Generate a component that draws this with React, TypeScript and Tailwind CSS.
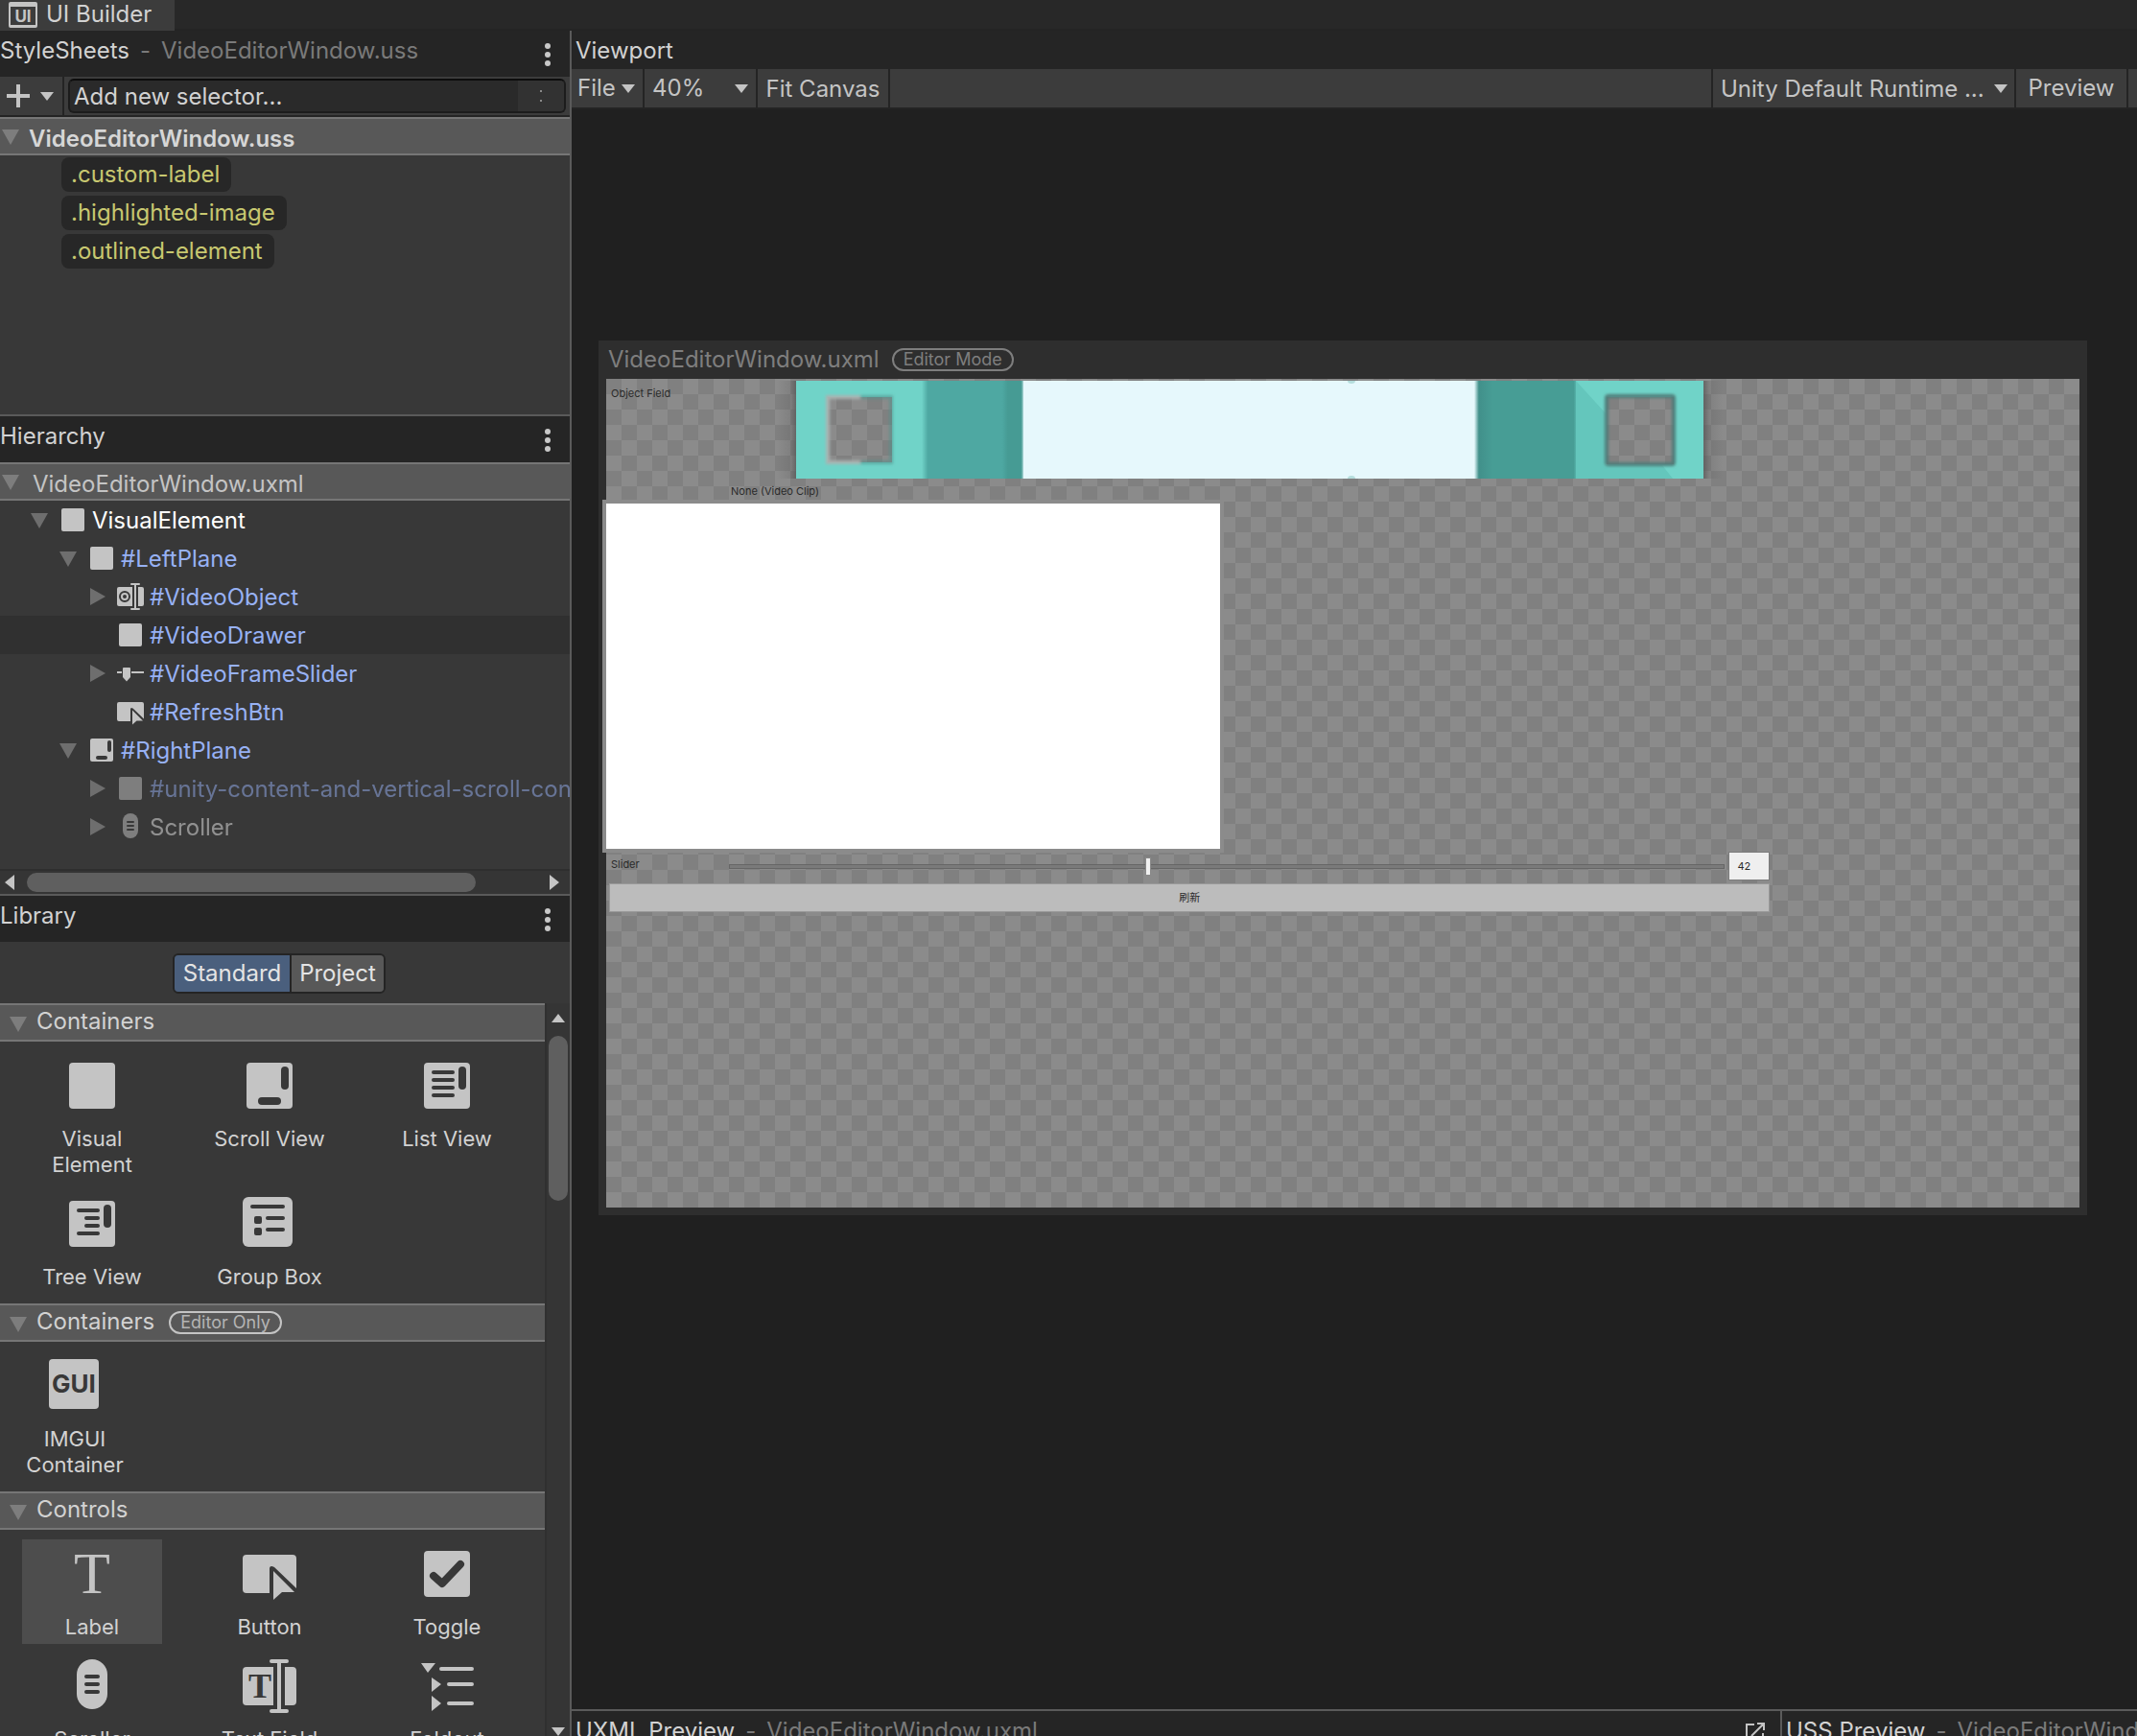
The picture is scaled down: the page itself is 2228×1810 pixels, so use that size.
import type { ReactNode } from 'react';

type IconName =
  | 'element'
  | 'scrollView'
  | 'listView'
  | 'treeView'
  | 'groupBox'
  | 'imgui'
  | 'label'
  | 'button'
  | 'toggle'
  | 'scroller'
  | 'textField'
  | 'objectField'
  | 'slider'
  | 'foldout';

// All element icons share a 64x64 grid. INK is the cut-out colour of the panel behind them.
const FILL = '#c4c4c4';
const INK = '#383838';

const ICONS: Record<IconName, ReactNode> = {
  element: <rect x="8" y="8" width="48" height="48" rx="4" fill={FILL} />,
  scrollView: (
    <>
      <rect x="8" y="8" width="48" height="48" rx="4" fill={FILL} />
      <rect x="44" y="12" width="8" height="24" rx="4" fill={INK} />
      <rect x="20" y="44" width="24" height="8" rx="4" fill={INK} />
    </>
  ),
  listView: (
    <>
      <rect x="8" y="8" width="48" height="48" rx="4" fill={FILL} />
      <rect x="44" y="12" width="8" height="24" rx="4" fill={INK} />
      <path d="M18 18H38M18 26H38M18 34H38M18 42H38" stroke={INK} strokeWidth="4" strokeLinecap="round" />
    </>
  ),
  treeView: (
    <>
      <rect x="8" y="8" width="48" height="48" rx="4" fill={FILL} />
      <rect x="44" y="12" width="8" height="24" rx="4" fill={INK} />
      <path d="M18 18H38M26 26H38M26 34H38M18 42H38" stroke={INK} strokeWidth="4" strokeLinecap="round" />
    </>
  ),
  groupBox: (
    <>
      <rect x="4" y="4" width="52" height="52" rx="6" fill={FILL} />
      <path d="M14 14H46M30 26H46M30 38H46" stroke={INK} strokeWidth="4" strokeLinecap="round" />
      <rect x="16" y="24" width="8" height="8" rx="2" fill={INK} />
      <rect x="16" y="36" width="8" height="8" rx="2" fill={INK} />
    </>
  ),
  imgui: (
    <>
      <rect x="5" y="4" width="52" height="52" rx="4" fill={FILL} />
      <text x="31" y="39" textAnchor="middle" fontFamily="Inter, sans-serif" fontWeight="700" fontSize="26" fill={INK}>
        GUI
      </text>
    </>
  ),
  label: (
    <text x="32" y="52" textAnchor="middle" fontFamily="Liberation Serif, serif" fontSize="62" fill={FILL}>
      T
    </text>
  ),
  button: (
    <>
      <path d="M8 12H56Q60 12 60 16V47L37 25Q32 22 32 27V52H8Q4 52 4 48V16Q4 12 8 12Z" fill={FILL} />
      <path d="M36 29L58 51H45L36 59Z" fill={FILL} />
    </>
  ),
  toggle: (
    <>
      <rect x="8" y="8" width="48" height="48" rx="4" fill={FILL} />
      <path d="M18 34L27 42L46 22" fill="none" stroke={INK} strokeWidth="8" strokeLinecap="round" strokeLinejoin="round" />
    </>
  ),
  scroller: (
    <>
      <rect x="16" y="4" width="32" height="52" rx="16" fill={FILL} />
      <path d="M26 22H38M26 30H38M26 38H38" stroke={INK} strokeWidth="4" strokeLinecap="round" />
    </>
  ),
  textField: (
    <>
      <path d="M8 12H36V52H8Q4 52 4 48V16Q4 12 8 12ZM48 12H56Q60 12 60 16V48Q60 52 56 52H48Z" fill={FILL} />
      <path d="M42 6V58M34 6H50M34 58H50" stroke={FILL} strokeWidth="4" strokeLinecap="round" />
      <text x="22" y="44" textAnchor="middle" fontFamily="Liberation Serif, serif" fontWeight="700" fontSize="36" fill={INK}>
        T
      </text>
    </>
  ),
  objectField: (
    <>
      <path d="M8 12H36V52H8Q4 52 4 48V16Q4 12 8 12ZM48 12H56Q60 12 60 16V48Q60 52 56 52H48Z" fill={FILL} />
      <path d="M42 6V58M34 6H50M34 58H50" stroke={FILL} strokeWidth="4" strokeLinecap="round" />
      <circle cx="20" cy="32" r="10" fill="none" stroke={INK} strokeWidth="4" />
      <circle cx="20" cy="32" r="4" fill={INK} />
    </>
  ),
  slider: (
    <>
      <path d="M4 30H14M34 30H60" stroke={FILL} strokeWidth="4" />
      <path d="M16 22Q16 20 18 20H30Q32 20 32 22V40L24 49L16 40Z" fill={FILL} />
    </>
  ),
  foldout: (
    <>
      <path d="M5 8H20L12 18ZM16 23L26 30L16 38ZM16 42L26 50L16 58Z" fill={FILL} />
      <path d="M26 14H58M34 30H58M34 50H58" stroke={FILL} strokeWidth="4" strokeLinecap="round" />
    </>
  ),
};

function Icon({ name, className }: { name: IconName; className: string }) {
  return (
    <svg viewBox="0 0 64 64" className={className} aria-hidden="true">
      {ICONS[name]}
    </svg>
  );
}

function Caret({ open, className = 'text-[#6e6e6e]' }: { open: boolean; className?: string }) {
  return (
    <svg viewBox="0 0 22 22" className={`h-[22px] w-[22px] shrink-0 ${className}`} aria-hidden="true">
      <path d={open ? 'M2 4H20L11 20Z' : 'M4 2V20L20 11Z'} fill="currentColor" />
    </svg>
  );
}

function DropArrow() {
  return (
    <svg viewBox="0 0 14 9" className="h-[9px] w-[14px] shrink-0" aria-hidden="true">
      <path d="M0 0H14L7 9Z" fill="#c4c4c4" />
    </svg>
  );
}

function PanelHeader({ title, file, menu }: { title: string; file?: string; menu?: boolean }) {
  return (
    <div className="flex h-12 shrink-0 items-center justify-between bg-[#252525] pr-[19px]">
      <h2 className="flex gap-[11px] pb-1.5 whitespace-nowrap text-[#d2d2d2]">
        {title}
        {file ? (
          <>
            <span className="text-[#7a7a7a]">-</span>
            <span className="text-[#7a7a7a]">{file}</span>
          </>
        ) : null}
      </h2>
      {menu ? (
        <button aria-label={`${title} menu`} className="pt-0.5">
          <svg viewBox="0 0 8 26" className="h-[26px] w-2" fill="#c8c8c8">
            <circle cx="4" cy="4" r="3" />
            <circle cx="4" cy="13" r="3" />
            <circle cx="4" cy="22" r="3" />
          </svg>
        </button>
      ) : null}
    </div>
  );
}

const selectors = ['.custom-label', '.highlighted-image', '.outlined-element'];

function StyleSheets() {
  return (
    <section className="h-[402px] shrink-0 border-b-2 border-[#5a5a5a]">
      <PanelHeader title="StyleSheets" file="VideoEditorWindow.uss" menu />
      <div className="flex h-[42px] border-b-2 border-[#242424] bg-[#3c3c3c]">
        <button
          aria-label="Add stylesheet"
          className="flex w-[67px] shrink-0 items-center gap-[11px] border-r-2 border-[#242424] pl-[7px]"
        >
          <svg viewBox="0 0 24 24" className="h-6 w-6" stroke="#c4c4c4" strokeWidth="4">
            <path d="M12 0V24M0 12H24" />
          </svg>
          <DropArrow />
        </button>
        <div className="mx-1 my-0.5 flex min-w-0 flex-1 overflow-hidden rounded-md border-2 border-[#1c1c1c] border-t-[#0d0d0d] bg-[#2a2a2a]">
          <input
            aria-label="New selector"
            defaultValue="Add new selector..."
            className="min-w-0 flex-1 bg-transparent pt-0.5 pl-1 text-[#d2d2d2] outline-none"
          />
          <button aria-label="Selector options" className="flex w-12 flex-col items-center justify-center gap-2 bg-[#323232]">
            <span className="h-0.5 w-0.5 bg-[#8a8a8a]" />
            <span className="h-0.5 w-0.5 bg-[#8a8a8a]" />
          </button>
        </div>
      </div>
      <div className="flex h-10 items-center gap-2 border-y-2 border-[#767676] bg-[#585858] font-semibold text-[#d6d6d6]">
        <Caret open className="text-[#7d7d7d]" />
        <span className="pt-1.5">VideoEditorWindow.uss</span>
      </div>
      <ul>
        {selectors.map((selector) => (
          <li key={selector} className="flex h-10 items-center pl-16">
            <span className="flex h-9 items-center rounded-lg bg-[#272727] pr-3 pl-2.5 text-[#c8c870]">{selector}</span>
          </li>
        ))}
      </ul>
    </section>
  );
}

type TreeNode = {
  name: string;
  icon: IconName;
  indent: string;
  caret?: 'open' | 'closed';
  color: string;
  dimmed?: boolean;
  hovered?: boolean;
};

const BLUE = 'text-[#97b1f4]';

const nodes: TreeNode[] = [
  { name: 'VisualElement', icon: 'element', indent: 'pl-[30px]', caret: 'open', color: 'text-white' },
  { name: '#LeftPlane', icon: 'element', indent: 'pl-[60px]', caret: 'open', color: BLUE },
  { name: '#VideoObject', icon: 'objectField', indent: 'pl-[90px]', caret: 'closed', color: BLUE },
  { name: '#VideoDrawer', icon: 'element', indent: 'pl-[90px]', color: BLUE, hovered: true },
  { name: '#VideoFrameSlider', icon: 'slider', indent: 'pl-[90px]', caret: 'closed', color: BLUE },
  { name: '#RefreshBtn', icon: 'button', indent: 'pl-[90px]', color: BLUE },
  { name: '#RightPlane', icon: 'scrollView', indent: 'pl-[60px]', caret: 'open', color: BLUE },
  {
    name: '#unity-content-and-vertical-scroll-container',
    icon: 'element',
    indent: 'pl-[90px]',
    caret: 'closed',
    color: BLUE,
    dimmed: true,
  },
  { name: 'Scroller', icon: 'scroller', indent: 'pl-[90px]', caret: 'closed', color: 'text-[#e8e8e8]', dimmed: true },
];

function Hierarchy() {
  return (
    <section className="flex h-[500px] shrink-0 flex-col border-b-2 border-[#5a5a5a]">
      <PanelHeader title="Hierarchy" menu />
      <div className="flex h-10 shrink-0 items-center gap-3 border-y-2 border-[#767676] bg-[#585858] text-[#c4c4c4]">
        <Caret open className="text-[#7d7d7d]" />
        <span className="pt-1.5">VideoEditorWindow.uxml</span>
      </div>
      <ul className="flex-1">
        {nodes.map((node) => (
          <li
            key={node.name}
            className={`flex h-10 items-center overflow-hidden whitespace-nowrap ${node.indent} ${node.hovered ? 'bg-[#303030]' : ''}`}
          >
            {node.caret ? <Caret open={node.caret === 'open'} /> : <span className="w-[22px] shrink-0" />}
            <span className={`flex items-center gap-1 pl-2 ${node.color} ${node.dimmed ? 'opacity-50' : ''}`}>
              <Icon name={node.icon} className="h-8 w-8 shrink-0" />
              <span className="pt-0.5">{node.name}</span>
            </span>
          </li>
        ))}
      </ul>
      <div className="flex h-[26px] shrink-0 items-center gap-[13px] border-t-2 border-[#2e2e2e] bg-[#353535] px-[5px]">
        <svg viewBox="0 0 10 16" className="h-4 w-2.5" aria-hidden="true">
          <path d="M10 0V16L0 8Z" fill="#c4c4c4" />
        </svg>
        <div className="flex-1">
          <div className="h-5 w-[88%] rounded-full bg-[#5f5f5f]" />
        </div>
        <svg viewBox="0 0 10 16" className="mr-1.5 h-4 w-2.5" aria-hidden="true">
          <path d="M0 0V16L10 8Z" fill="#c4c4c4" />
        </svg>
      </div>
    </section>
  );
}

function GroupHeader({ title, badge }: { title: string; badge?: string }) {
  return (
    <h3 className="flex h-10 items-center border-y-2 border-[#767676] bg-[#585858] pl-2 text-[#d2d2d2]">
      <Caret open className="mt-0.5 text-[#7d7d7d]" />
      <span className="pb-0.5 pl-2">{title}</span>
      {badge ? (
        <span className="ml-[15px] flex h-6 items-center rounded-xl border-2 border-[#c4c4c4] px-2.5 text-lg text-[#b4b4b4]">
          {badge}
        </span>
      ) : null}
    </h3>
  );
}

function LibraryItem({ label, icon, className = 'w-[146px]' }: { label: string; icon: IconName; className?: string }) {
  return (
    <button className={`flex flex-col items-center gap-2.5 self-start px-1 py-1 text-[22px] leading-[27px] text-[#d2d2d2] ${className}`}>
      <Icon name={icon} className="h-16 w-16" />
      {label}
    </button>
  );
}

function Library() {
  return (
    <section className="flex min-h-0 flex-1 flex-col">
      <PanelHeader title="Library" menu />
      <div className="flex h-16 shrink-0 items-center justify-center pt-0.5 pr-3">
        <div className="flex h-[42px] overflow-hidden rounded-md border-2 border-[#242424] text-[#e4e4e4]">
          <button className="w-[122px] border-r-2 border-[#242424] bg-[#4a5f7d]">Standard</button>
          <button className="w-24 bg-[#585858]">Project</button>
        </div>
      </div>
      <div className="flex min-h-0 flex-1">
        <div className="min-w-0 flex-1 overflow-hidden">
          <GroupHeader title="Containers" />
          <div className="grid grid-cols-[146px_146px_146px] gap-x-[39px] gap-y-2 py-2.5 pl-[23px]">
            <LibraryItem label="Visual Element" icon="element" />
            <LibraryItem label="Scroll View" icon="scrollView" />
            <LibraryItem label="List View" icon="listView" />
            <LibraryItem label="Tree View" icon="treeView" />
            <LibraryItem label="Group Box" icon="groupBox" />
          </div>
          <GroupHeader title="Containers" badge="Editor Only" />
          <div className="flex py-2.5 pl-[23px]">
            <LibraryItem label="IMGUI Container" icon="imgui" className="w-[110px]" />
          </div>
          <GroupHeader title="Controls" />
          <div className="grid grid-cols-[146px_146px_146px] gap-x-[39px] gap-y-2 py-2.5 pl-[23px]">
            <LibraryItem label="Label" icon="label" className="w-[146px] bg-[#4d4d4d]" />
            <LibraryItem label="Button" icon="button" />
            <LibraryItem label="Toggle" icon="toggle" />
            <LibraryItem label="Scroller" icon="scroller" />
            <LibraryItem label="Text Field" icon="textField" />
            <LibraryItem label="Foldout" icon="foldout" />
          </div>
        </div>
        <div className="flex w-[26px] shrink-0 flex-col items-center border-l-2 border-[#303030] bg-[#353535] pt-[11px]">
          <svg viewBox="0 0 14 9" className="h-[9px] w-[14px]" aria-hidden="true">
            <path d="M0 9H14L7 0Z" fill="#c4c4c4" />
          </svg>
          <div className="flex w-5 flex-1 flex-col pt-[14px]">
            <div className="h-[172px] rounded-full bg-[#5f5f5f]" />
          </div>
          <DropArrow />
        </div>
      </div>
    </section>
  );
}

// Preview texture shown by the object field: two teal brackets around a pale panel.
function ClipThumbnail() {
  return (
    <svg viewBox="0 0 946 102" className="h-[102px] w-full max-w-[946px] overflow-visible" role="img" aria-label="Clip preview">
      <defs>
        <linearGradient id="edgeLeft">
          <stop offset="0" stopColor="#555" stopOpacity="0" />
          <stop offset="0.7" stopColor="#555" stopOpacity="0.2" />
          <stop offset="1" stopColor="#555" stopOpacity="0.7" />
        </linearGradient>
        <linearGradient id="edgeRight">
          <stop offset="0" stopColor="#555" stopOpacity="0.7" />
          <stop offset="0.3" stopColor="#555" stopOpacity="0.2" />
          <stop offset="1" stopColor="#555" stopOpacity="0" />
        </linearGradient>
        <linearGradient id="bandLeft">
          <stop offset="0" stopColor="#70d3c8" />
          <stop offset="0.06" stopColor="#4ea8a2" />
          <stop offset="0.78" stopColor="#4ea8a2" />
          <stop offset="0.84" stopColor="#469b94" />
          <stop offset="0.97" stopColor="#469b94" />
          <stop offset="1" stopColor="#e6f8fc" />
        </linearGradient>
        <linearGradient id="bandRight">
          <stop offset="0" stopColor="#e6f8fc" />
          <stop offset="0.045" stopColor="#41908a" />
          <stop offset="0.18" stopColor="#479d95" />
          <stop offset="0.96" stopColor="#479d95" />
          <stop offset="1" stopColor="#64c6bc" />
        </linearGradient>
        <filter id="soft" x="-20%" y="-20%" width="140%" height="140%">
          <feGaussianBlur stdDeviation="1.5" />
        </filter>
      </defs>
      <rect x="-20" width="20" height="102" fill="url(#edgeLeft)" />
      <rect x="946" width="20" height="102" fill="url(#edgeRight)" />
      <path fillRule="evenodd" d="M0 0H136V102H0ZM33 17V85H100V17Z" fill="#70d3c8" />
      <g fill="none" strokeWidth="4" filter="url(#soft)">
        <path d="M67 17H33V85H67" stroke="#a9b3b1" />
        <path d="M67 17H99V85H67" stroke="#4f918b" strokeOpacity="0.6" />
      </g>
      <rect x="131" width="107" height="102" fill="url(#bandLeft)" />
      <rect x="237" width="472" height="102" fill="#e6f8fc" />
      <path d="M575 0A4 3 0 0 0 583 0ZM575 102A4 3 0 0 1 583 102Z" fill="#b5dedd" />
      <rect x="707" width="108" height="102" fill="url(#bandRight)" />
      <path fillRule="evenodd" d="M813 0H946V102H813ZM845 17V87H915V17Z" fill="#70d3c8" />
      <path d="M813 0L844 34V88H903L914 102H813Z" fill="#64c6bc" />
      <rect x="845" y="16" width="70" height="71" rx="2" fill="none" stroke="#4f7d79" strokeWidth="4" filter="url(#soft)" />
    </svg>
  );
}

function Canvas() {
  return (
    <div className="mt-[241px] mr-[52px] ml-7 bg-[#2e2e2e] px-2 pb-2">
      <div className="flex h-10 items-center gap-[13px] pl-0.5 text-[#7e7e7e]">
        <span>VideoEditorWindow.uxml</span>
        <span className="flex h-6 items-center rounded-xl border-2 border-[#7e7e7e] px-2.5 text-lg">Editor Mode</span>
      </div>
      <div className="aspect-video bg-[repeating-conic-gradient(#8b8b8b_0_25%,#808080_0_50%)] bg-[length:32px_32px] text-[11px] leading-[18px] text-[#2a2a2a]">
        <div className="flex w-[79%] flex-col">
          <div className="flex h-[126px] pt-0.5">
            <span className="w-32 shrink-0 pt-1 pl-[5px]">Object Field</span>
            <div className="flex min-w-0 flex-1 flex-col items-center">
              <ClipThumbnail />
              <span className="self-start pt-1 pl-0.5">None (Video Clip)</span>
            </div>
          </div>
          <div className="-ml-1 h-[368px] w-[648px] border-4 border-[#8b8b8b] bg-white" />
          <div className="flex h-7 items-center">
            <label htmlFor="frame" className="w-32 shrink-0 pb-1 pl-[5px]">
              Slider
            </label>
            <input
              id="frame"
              type="range"
              defaultValue={42}
              className="h-[5px] min-w-0 flex-1 appearance-none border border-[#666] bg-[#7a7a7a] [&::-webkit-slider-thumb]:h-[19px] [&::-webkit-slider-thumb]:w-[6px] [&::-webkit-slider-thumb]:appearance-none [&::-webkit-slider-thumb]:border [&::-webkit-slider-thumb]:border-[#8a8a8a] [&::-webkit-slider-thumb]:bg-[#f0f0f0]"
            />
            <input
              aria-label="Frame"
              defaultValue="42"
              className="ml-1 h-[30px] w-[43px] border border-[#7c7c7c] bg-[#efefef] pl-2 outline-none"
            />
          </div>
          <button className="mt-1 ml-[3px] h-[30px] border border-[#999] bg-[#bcbcbc] font-['Inter','Noto_Sans_CJK_SC',sans-serif]">
            刷新
          </button>
        </div>
      </div>
    </div>
  );
}

function Viewport() {
  return (
    <section className="flex min-h-0 flex-1 flex-col bg-[#202020]">
      <h2 className="flex h-10 shrink-0 items-center bg-[#252525] pt-0.5 pl-1 text-[#d2d2d2]">Viewport</h2>
      <div className="flex h-[42px] shrink-0 border-b-2 border-[#242424] bg-[#3c3c3c] text-[#c4c4c4]">
        <button className="flex w-[76px] items-center justify-between border-r-2 border-[#242424] pr-2 pl-1.5">
          File
          <DropArrow />
        </button>
        <div className="flex w-[118px] items-center border-r-2 border-[#242424] pr-2 pl-2">
          <select aria-label="Zoom" className="min-w-0 flex-1 appearance-none bg-transparent outline-none">
            <option>40%</option>
          </select>
          <DropArrow />
        </div>
        <button className="w-[138px] border-r-2 border-[#242424] pt-0.5 whitespace-nowrap">Fit Canvas</button>
        <div className="ml-auto flex w-[318px] items-center border-x-2 border-[#242424] pr-[7px] pl-2">
          <select aria-label="Theme" className="min-w-0 flex-1 appearance-none bg-transparent pt-0.5 outline-none">
            <option>Unity Default Runtime ...</option>
          </select>
          <DropArrow />
        </div>
        <button className="mr-[9px] w-[117px] border-r-2 border-[#242424]">Preview</button>
      </div>
      <div className="min-h-0 flex-1 overflow-hidden">
        <Canvas />
      </div>
    </section>
  );
}

export default function App() {
  return (
    <div className="flex h-screen flex-col overflow-hidden bg-[#383838] font-['Inter',sans-serif] text-2xl leading-7">
      <header className="flex h-8 shrink-0 border-b-2 border-[#242424] bg-[#282828]">
        <h1 className="-mb-0.5 flex h-8 w-[182px] items-center gap-[9px] bg-[#3c3c3c] pb-0.5 pl-[9px] text-[#d2d2d2]">
          <svg viewBox="0 0 30 28" className="h-7 w-[30px]" aria-hidden="true">
            <path fillRule="evenodd" d="M2 1H28Q30 1 30 3V26Q30 28 28 28H2Q0 28 0 26V3Q0 1 2 1ZM2 6V25H28V6Z" fill="#c4c4c4" />
            <text x="15" y="22" textAnchor="middle" fontFamily="Inter, sans-serif" fontWeight="700" fontSize="17" fill="#c4c4c4">
              UI
            </text>
          </svg>
          UI Builder
        </h1>
      </header>
      <div className="flex min-h-0 flex-1">
        <aside className="flex w-[596px] shrink-0 flex-col border-r-2 border-[#5a5a5a]">
          <StyleSheets />
          <Hierarchy />
          <Library />
        </aside>
        <main className="flex min-w-0 flex-1 flex-col">
          <Viewport />
          <footer className="flex h-7 shrink-0 overflow-hidden border-t-2 border-[#5a5a5a] bg-[#252525]">
            <div className="flex h-12 flex-1 justify-between border-r-2 border-[#5a5a5a] pl-1">
              <PanelHeader title="UXML Preview" file="VideoEditorWindow.uxml" />
              <button aria-label="Open UXML in editor" className="flex w-9 pt-3">
                <svg viewBox="0 0 20 20" className="h-5 w-5" fill="none" stroke="#c4c4c4" strokeWidth="2">
                  <path d="M9 2H1V19H18V11M6 14L18 2M12 1H19V8" />
                </svg>
              </button>
            </div>
            <div className="h-12 w-[370px] shrink-0 overflow-hidden pl-1">
              <PanelHeader title="USS Preview" file="VideoEditorWindow.uss" />
            </div>
          </footer>
        </main>
      </div>
    </div>
  );
}
